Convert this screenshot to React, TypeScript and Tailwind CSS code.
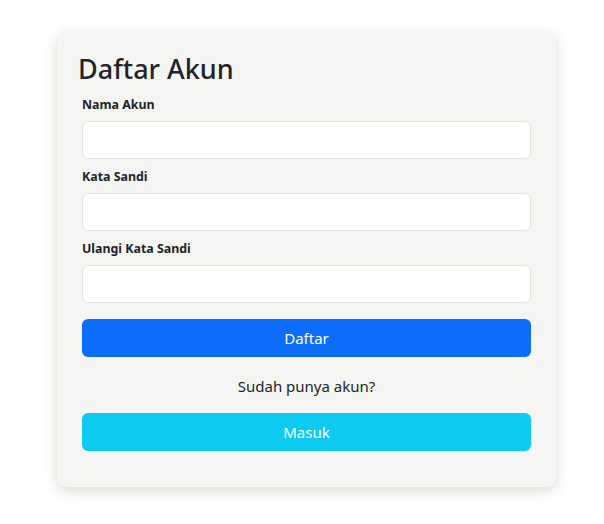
export default function App() {
  const font = { fontFamily: '"Segoe UI", "Noto Sans", "Open Sans", sans-serif' };
  return (
    <div className="min-h-[524px] w-[604px] bg-white pt-[31px] pl-[57px]" style={font}>
      <div className="w-[499px] rounded-[10px] bg-[#f5f6f4] px-[21px] pt-[22px] pb-[36px] shadow-[0_4px_14px_rgba(0,0,0,0.15)]">
        <h1 className="text-[27px] font-medium leading-[1.2] text-[#212529] mb-[10px]">Daftar Akun</h1>
        <div className="px-[4px] flex flex-col">
          <label className="text-[12.4px] font-bold text-[#212529] leading-[20px] mb-[6px]">Nama Akun</label>
          <input className="h-[38px] rounded-[6px] border border-[#dee2e6] bg-white mb-[8px]" />
          <label className="text-[12.4px] font-bold text-[#212529] leading-[20px] mb-[6px]">Kata Sandi</label>
          <input type="password" className="h-[38px] rounded-[6px] border border-[#dee2e6] bg-white mb-[8px]" />
          <label className="text-[12.4px] font-bold text-[#212529] leading-[20px] mb-[6px]">Ulangi Kata Sandi</label>
          <input type="password" className="h-[38px] rounded-[6px] border border-[#dee2e6] bg-white mb-[16px]" />
          <button className="h-[38px] rounded-[6px] bg-[#0d6efd] text-white text-[15px]">Daftar</button>
          <p className="text-center text-[15px] text-[#212529] leading-[24px] mt-[17px] mb-[15px]">Sudah punya akun?</p>
          <button className="h-[38px] rounded-[6px] bg-[#0dcaf0] text-white text-[15px]">Masuk</button>
        </div>
      </div>
    </div>
  );
}
